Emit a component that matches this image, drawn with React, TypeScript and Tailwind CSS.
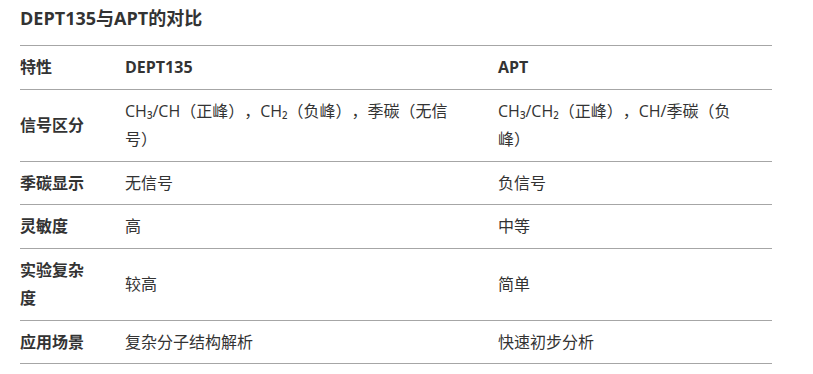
const rows: { label: string; dept: React.ReactNode; apt: React.ReactNode }[] = [
  {
    label: '信号区分',
    dept: 'CH₃/CH（正峰），CH₂（负峰），季碳（无信号）',
    apt: 'CH₃/CH₂（正峰），CH/季碳（负峰）',
  },
  { label: '季碳显示', dept: '无信号', apt: '负信号' },
  { label: '灵敏度', dept: '高', apt: '中等' },
  { label: '实验复杂度', dept: '较高', apt: '简单' },
  { label: '应用场景', dept: '复杂分子结构解析', apt: '快速初步分析' },
];

export default function App() {
  return (
    <div
      className="min-h-screen bg-white pl-5 pt-[5px] text-[#333333] [text-spacing-trim:space-all]"
      style={{ fontFamily: '"Open Sans", "Noto Sans CJK SC", sans-serif' }}
    >
      {/* Heading */}
      <h3 className="text-[18px] font-bold leading-[26px] text-[#333333]">DEPT135与APT的对比</h3>

      <table className="mt-[14px] w-[752px] table-fixed border-collapse text-[16px] leading-[28.5px]">
        <colgroup>
          <col className="w-[89px]" />
          <col className="w-[373px]" />
          <col className="w-[290px]" />
        </colgroup>
        <thead>
          <tr className="border-y border-[#a6a6a6]">
            <th className="py-[7px] pr-4 text-left align-middle font-bold">特性</th>
            <th className="px-4 py-[7px] text-left align-middle font-bold">DEPT135</th>
            <th className="px-4 py-[7px] pr-[34px] text-left align-middle font-bold">APT</th>
          </tr>
        </thead>
        <tbody>
          {rows.map((r) => (
            <tr key={r.label} className="border-b border-[#a6a6a6]">
              <td className="py-[7px] pr-4 align-middle font-bold">{r.label}</td>
              <td className="px-4 py-[7px] align-middle">{r.dept}</td>
              <td className="py-[7px] pl-4 pr-[34px] align-middle">{r.apt}</td>
            </tr>
          ))}
        </tbody>
      </table>
    </div>
  );
}
